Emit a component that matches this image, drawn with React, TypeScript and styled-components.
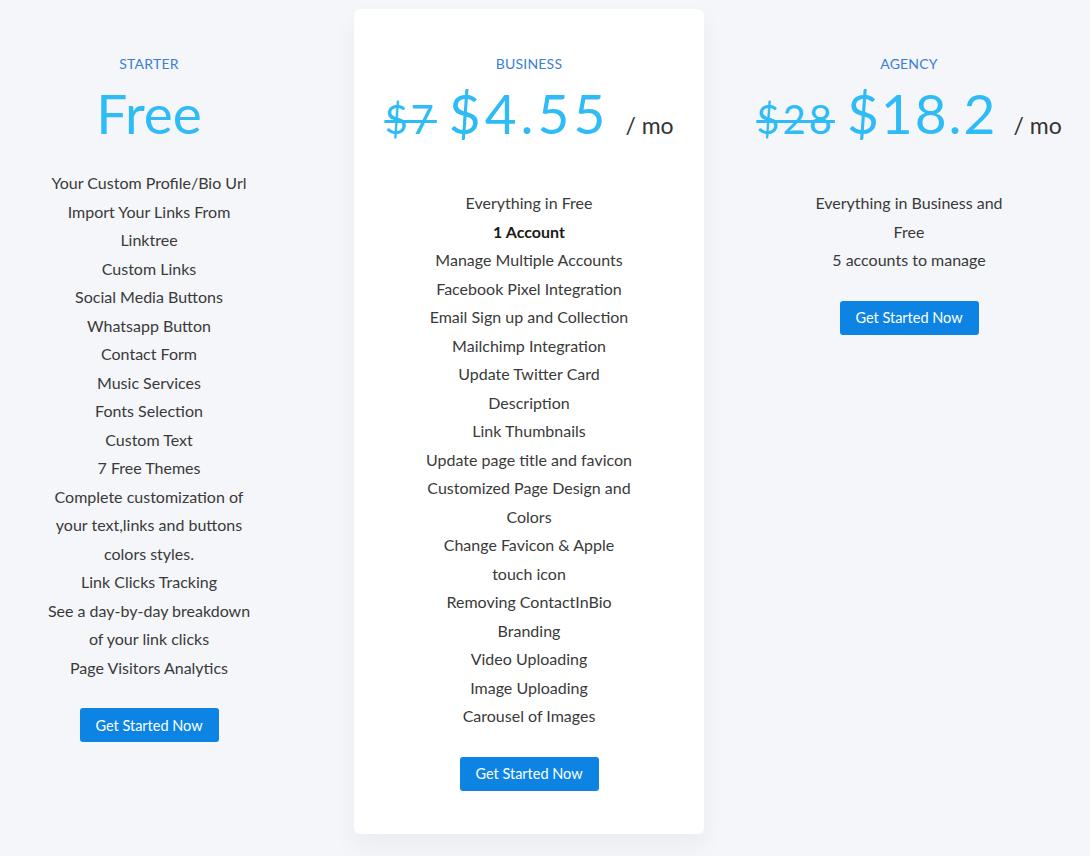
import React from "react";
import styled, { createGlobalStyle } from "styled-components";

const Global = createGlobalStyle`
  html, body { margin: 0; padding: 0; background: #f4f6f9; }
  body { font-family: Lato, "Open Sans", sans-serif; overflow: hidden; }
`;

const Page = styled.div`
  width: 1090px;
  height: 856px;
  background: #f4f6f9;
  overflow: hidden;
`;

const Row = styled.div`
  display: grid;
  grid-template-columns: repeat(3, 350px);
  column-gap: 30px;
  align-items: start;
  margin: 9px 0 0 -26px;
`;

const Column = styled.div<{ $featured?: boolean }>`
  display: flex;
  flex-direction: column;
  align-items: center;
  padding: 45px 0 43px;
  border-radius: 6px;
  background: ${(p) => (p.$featured ? "#ffffff" : "transparent")};
  box-shadow: ${(p) => (p.$featured ? "0 12px 24px rgba(30, 50, 90, 0.05)" : "none")};
`;

const PlanName = styled.div`
  font-size: 14px;
  line-height: 20px;
  color: #3a7fd6;
  text-transform: uppercase;
  letter-spacing: 0.2px;
`;

const PriceLine = styled.div`
  display: flex;
  align-items: baseline;
  justify-content: center;
  height: 70px;
  margin-top: 4px;
  color: #2fbbf6;
  white-space: nowrap;
`;

const OldPrice = styled.span`
  font-size: 40px;
  letter-spacing: 3px;
  text-decoration: line-through;
  text-decoration-thickness: 3px;
  margin-right: 12px;
  line-height: 70px;
`;

const Price = styled.span<{ $spacing: number }>`
  font-size: 55px;
  line-height: 70px;
  letter-spacing: ${(p) => p.$spacing}px;
`;

const Period = styled.span`
  font-size: 23px;
  color: #333;
  margin-left: 16px;
`;

const Features = styled.ul<{ $offset: number }>`
  list-style: none;
  margin: ${(p) => p.$offset}px 0 0;
  padding: 0;
  text-align: center;
`;

const Feature = styled.li<{ $strong?: boolean }>`
  font-size: 16px;
  line-height: 28.5px;
  white-space: pre;
  color: ${(p) => (p.$strong ? "#1a1a1a" : "#3a3a3a")};
  font-weight: ${(p) => (p.$strong ? 700 : 400)};
`;

const Button = styled.button`
  margin-top: 26px;
  width: 139px;
  height: 34px;
  border: none;
  border-radius: 3px;
  background: #0d84e4;
  color: #fff;
  font-family: Lato, "Open Sans", sans-serif;
  font-size: 14.5px;
  cursor: pointer;
`;

type Plan = {
  name: string;
  old?: string;
  price: string;
  spacing: number;
  period?: boolean;
  featured?: boolean;
  offset: number;
  features: { text: string; strong?: boolean }[];
};

const plans: Plan[] = [
  {
    name: "Starter",
    price: "Free",
    spacing: 0,
    offset: 21,
    features: [
      "Your Custom Profile/Bio Url",
      "Import Your Links From\nLinktree",
      "Custom Links",
      "Social Media Buttons",
      "Whatsapp Button",
      "Contact Form",
      "Music Services",
      "Fonts Selection",
      "Custom Text",
      "7 Free Themes",
      "Complete customization of\nyour text,links and buttons\ncolors styles.",
      "Link Clicks Tracking",
      "See a day-by-day breakdown\nof your link clicks",
      "Page Visitors Analytics",
    ].map((text) => ({ text })),
  },
  {
    name: "Business",
    old: "$7",
    price: "$4.55",
    spacing: 4,
    period: true,
    featured: true,
    offset: 41,
    features: [
      { text: "Everything in Free" },
      { text: "1 Account", strong: true },
      { text: "Manage Multiple Accounts" },
      { text: "Facebook Pixel Integration" },
      { text: "Email Sign up and Collection" },
      { text: "Mailchimp Integration" },
      { text: "Update Twitter Card\nDescription" },
      { text: "Link Thumbnails" },
      { text: "Update page title and favicon" },
      { text: "Customized Page Design and\nColors" },
      { text: "Change Favicon & Apple\ntouch icon" },
      { text: "Removing ContactInBio\nBranding" },
      { text: "Video Uploading" },
      { text: "Image Uploading" },
      { text: "Carousel of Images" },
    ],
  },
  {
    name: "Agency",
    old: "$28",
    price: "$18.2",
    spacing: 2,
    period: true,
    offset: 41,
    features: [
      { text: "Everything in Business and\nFree" },
      { text: "5 accounts to manage" },
    ],
  },
];

export default function App() {
  return (
    <Page>
      <Global />
      <Row>
        {plans.map((p) => (
          <Column key={p.name} $featured={p.featured}>
            <PlanName>{p.name}</PlanName>
            <PriceLine>
              {p.old && <OldPrice>{p.old}</OldPrice>}
              <Price $spacing={p.spacing}>{p.price}</Price>
              {p.period && <Period>/ mo</Period>}
            </PriceLine>
            <Features $offset={p.offset}>
              {p.features.map((f) => (
                <Feature key={f.text} $strong={f.strong}>
                  {f.text}
                </Feature>
              ))}
            </Features>
            <Button>Get Started Now</Button>
          </Column>
        ))}
      </Row>
    </Page>
  );
}
